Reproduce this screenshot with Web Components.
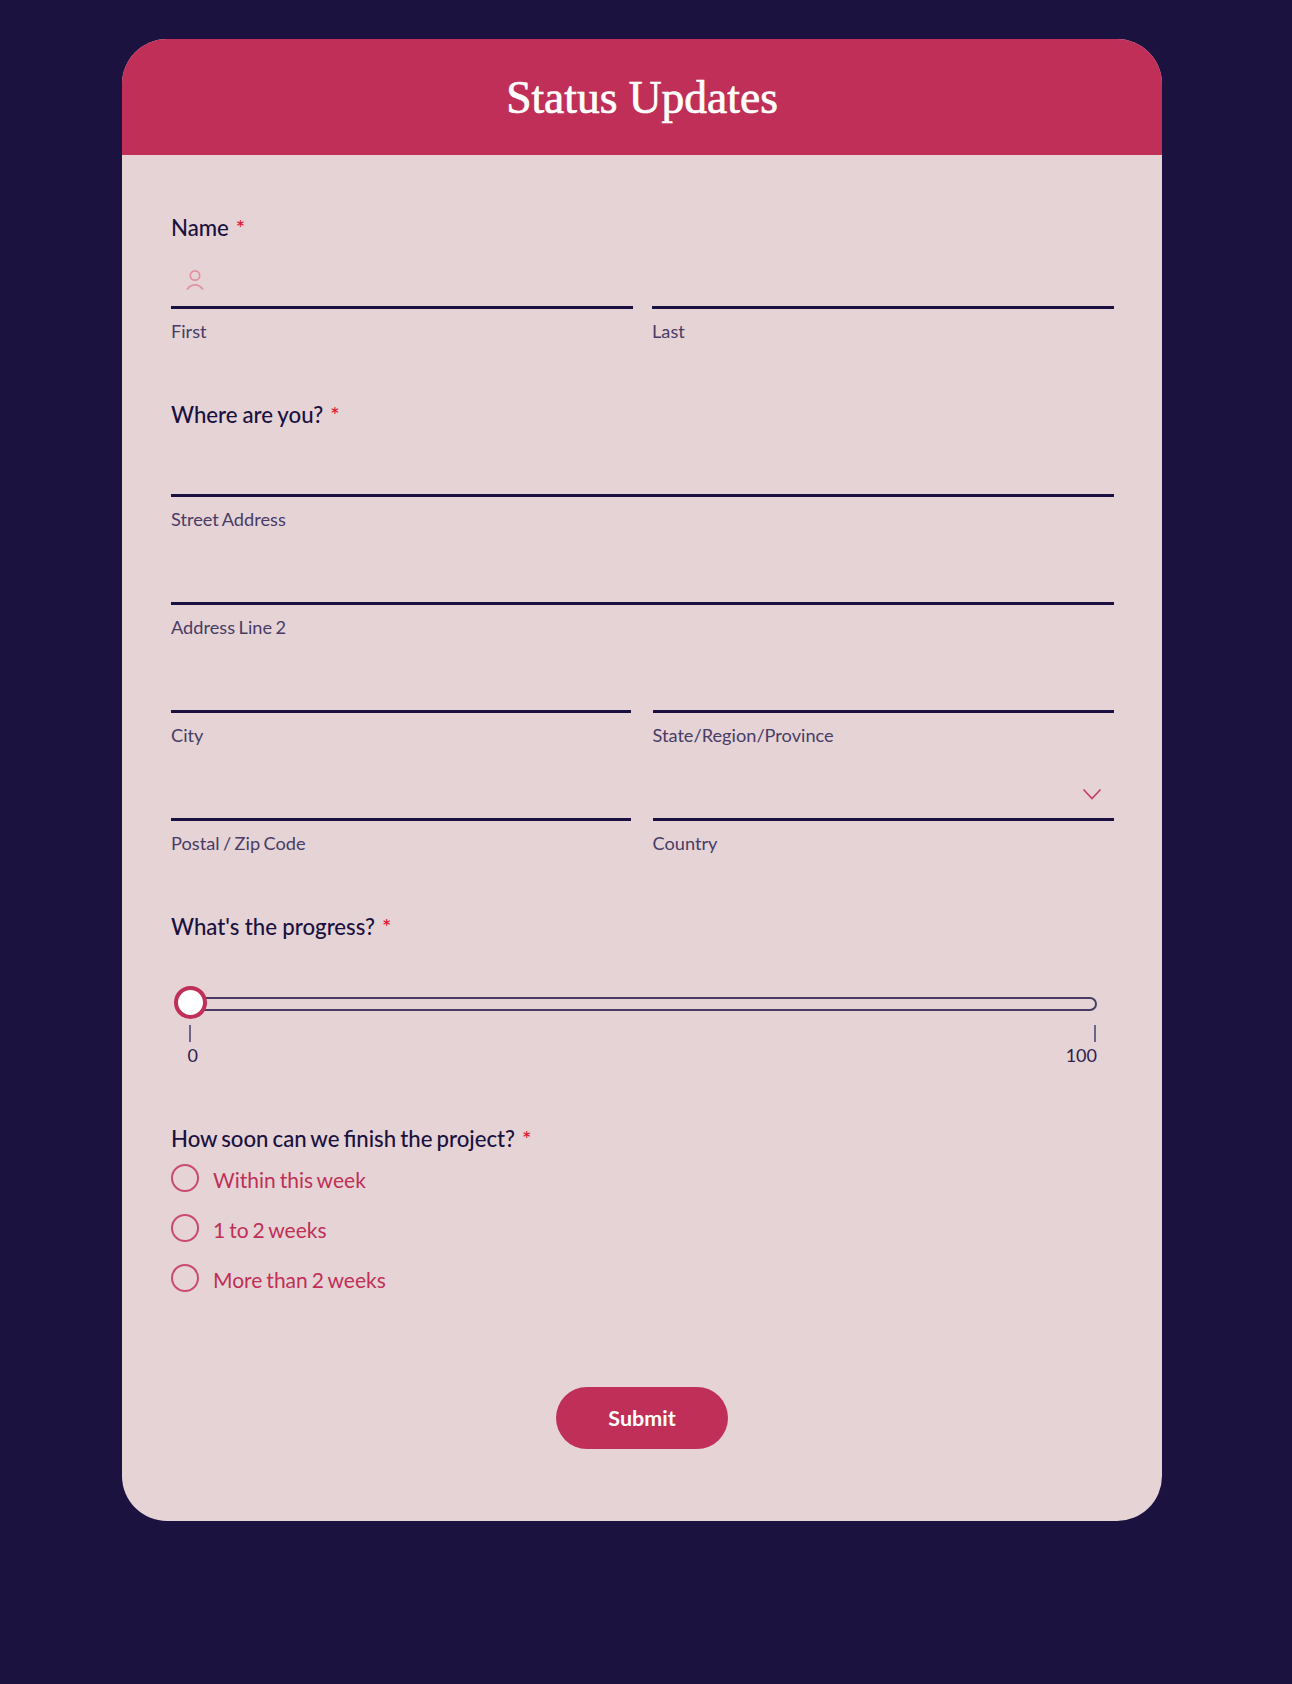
<!doctype html>
<html lang="en"><head><meta charset="utf-8"><title>Status Updates</title>
<style>
html,body{margin:0;background:#1b1240}
body{font-family:Lato,"Open Sans",sans-serif;color:#1a1140}
</style></head>
<body>
<status-page>
  <form-card>
    <form-header slot="header">Status Updates</form-header>
    <field-group label="Name" style="--after:4px;--next:57.8px">
      <field-row cols="1fr 1fr" gap="19">
        <line-input caption="First" icon="user"></line-input>
        <line-input caption="Last"></line-input>
      </field-row>
    </field-group>
    <field-group label="Where are you?" style="--after:5px;--next:57.8px;--ws:-.7px">
      <line-input caption="Street Address"></line-input>
      <line-input caption="Address Line 2"></line-input>
      <field-row cols="459.5px 1fr" gap="22">
        <line-input caption="City"></line-input>
        <line-input caption="State/Region/Province"></line-input>
      </field-row>
      <field-row cols="459.5px 1fr" gap="22">
        <line-input caption="Postal / Zip Code"></line-input>
        <line-input caption="Country" icon="chevron"></line-input>
      </field-row>
    </field-group>
    <field-group label="What's the progress?" style="--after:5px;--next:58px;--ws:-.2px">
      <range-slider min="0" max="100"></range-slider>
    </field-group>
    <field-group label="How soon can we finish the project?" style="--after:12px;--next:0px;--ws:-1.55px">
      <radio-list>
        <radio-option>Within this week</radio-option>
        <radio-option>1 to 2 weeks</radio-option>
        <radio-option>More than 2 weeks</radio-option>
      </radio-list>
    </field-group>
    <submit-button slot="footer">Submit</submit-button>
  </form-card>
</status-page>
<script>
function def(name, css, html){
  customElements.define(name, class extends HTMLElement{
    constructor(){super();this.attachShadow({mode:'open'});}
    connectedCallback(){
      this.shadowRoot.innerHTML='<style>'+css+'</style>'+(typeof html==='function'?html(this):html);
    }
  });
}
def('status-page',`:host{display:block;box-sizing:border-box;min-height:1684px;padding:38.5px 0 0 122px;background:#1b1240}`,`<slot></slot>`);
def('form-card',`:host{display:block;width:1040px;background:#e6d3d5;border-radius:45px;overflow:hidden}
.body{display:flex;flex-direction:column;padding:58px 48px 0 49px}
.foot{display:flex;justify-content:center;padding:95px 0 71.5px}`,
`<slot name="header"></slot><div class="body"><slot></slot></div><div class="foot"><slot name="footer"></slot></div>`);
def('form-header',`:host{display:flex;align-items:center;justify-content:center;height:116.5px;background:#bf2f57;color:#fff;font:400 45.5px/1 "Liberation Serif",serif;-webkit-text-stroke:.7px #fff}
span{position:relative;top:1px}`,`<span><slot></slot></span>`);
def('field-group',`:host{display:block;margin-bottom:var(--next,58px)}
.l{display:flex;align-items:center;font:500 22.2px/28px Lato,sans-serif;word-spacing:var(--ws,-1.2px);color:#1a1140;margin-bottom:var(--after,5px)}
.l span{position:relative;top:1px}
.l .s{color:#e5152f;font-size:22px;line-height:1;top:1px;margin-left:7px}
.b{display:flex;flex-direction:column;gap:11px}`,
t=>`<div class="l"><span>${t.getAttribute('label')}</span><span class="s">*</span></div><div class="b"><slot></slot></div>`);
def('field-row',`:host{display:grid}`,t=>`<style>:host{grid-template-columns:${t.getAttribute('cols')};column-gap:${t.getAttribute('gap')}px}</style><slot></slot>`);
const icons={
 user:`<svg class="u" width="20" height="24" viewBox="0 0 20 24" fill="none" stroke="#e0939f" stroke-width="1.7"><circle cx="10" cy="6.5" r="4.7"/><path d="M2 20.5C4.5 17 7 15.8 10 15.8s5.5 1.2 8 4.7"/></svg>`,
 chevron:`<svg class="c" width="20" height="13" viewBox="0 0 20 13" fill="none" stroke="#c93f68" stroke-width="1.8"><path d="M1.5 1.5 10 10.5l8.5-9"/></svg>`
};
def('line-input',`:host{display:block;min-width:0}
.i{position:relative;box-sizing:border-box;height:64px;border-bottom:3px solid #1a1140}
.u{position:absolute;left:13.5px;top:24px}
.c{position:absolute;right:12px;top:31px}
.k{margin-top:11px;font:400 18.2px/22px Lato,sans-serif;word-spacing:-1.2px;color:#483c66}`,
t=>`<div class="i">${icons[t.getAttribute('icon')]||''}</div><div class="k">${t.getAttribute('caption')}</div>`);
def('range-slider',`:host{display:block;position:relative;height:121px;padding-top:52px;box-sizing:border-box}
.t{box-sizing:border-box;height:14px;margin:0 17px 0 12px;border:2px solid #483c66;border-radius:7px}
.h{position:absolute;left:2.5px;top:41px;box-sizing:border-box;width:33px;height:33px;border-radius:50%;background:#fff;border:4px solid #bf2f57}
.m{display:flex;justify-content:space-between;padding:14px 18.5px 0 18px}
.m i{display:block;width:2px;height:17px;background:#6e6485}
.n{display:flex;justify-content:space-between;padding:2px 17px 0 16.5px;font:400 18px/22px Lato,sans-serif;color:#2c2150}`,
t=>`<div class="t"></div><div class="h"></div><div class="m"><i></i><i></i></div><div class="n"><span>${t.getAttribute('min')}</span><span>${t.getAttribute('max')}</span></div>`);
def('radio-list',`:host{display:flex;flex-direction:column;gap:22px}`,`<slot></slot>`);
def('radio-option',`:host{display:flex;align-items:center;gap:14px;height:28px;font:400 21px/28px Lato,sans-serif;word-spacing:-1.4px;color:#bf2f57}
.r{box-sizing:border-box;width:28px;height:28px;border-radius:50%;border:2px solid #c94b70}
span{position:relative;top:2px}`,`<div class="r"></div><span><slot></slot></span>`);
def('submit-button',`:host{display:flex;align-items:center;justify-content:center;width:172px;height:62.5px;border-radius:31.25px;background:#bf2f57;color:#fff;font:700 21.5px/1 Lato,sans-serif}
span{position:relative;top:1px}`,`<span><slot></slot></span>`);
</script>
</body></html>
